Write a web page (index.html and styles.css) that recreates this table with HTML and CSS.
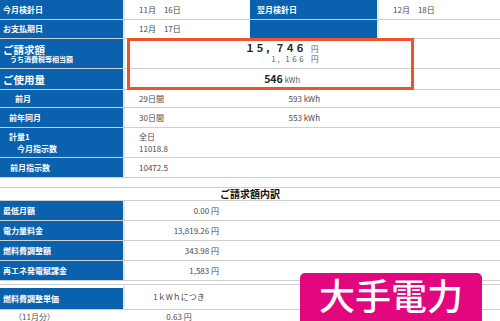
FILE: index.html
```html
<!DOCTYPE html>
<html lang="ja">
<head>
<meta charset="utf-8">
<title>ご請求内容</title>
<link rel="stylesheet" href="styles.css">
</head>
<body>
<div class="page">
  <div class="tbl">
    <div class="row h20">
      <div class="lab">今月検針日</div>
      <div class="val w127">11月　16日</div>
      <div class="lab lab2">翌月検針日</div>
      <div class="val">12月　18日</div>
    </div>
    <div class="row h19">
      <div class="lab">お支払期日</div>
      <div class="val w127">12月　17日</div>
      <div class="lab lab2"></div>
      <div class="val"></div>
    </div>
    <div class="row h30">
      <div class="lab">
        <span class="big">ご請求額</span>
        <span class="tiny">うち消費税等相当額</span>
      </div>
      <div class="val">
        <div class="amt">
          <div class="ln"><span class="num">１５，７４６</span><span class="yen">円</span></div>
          <div class="ln"><span class="num2">１，１６６</span><span class="yen">円</span></div>
        </div>
      </div>
    </div>
    <div class="row h21">
      <div class="lab"><span class="big">ご使用量</span></div>
      <div class="val">
        <div class="amt use"><span class="kw">546</span><span class="unit">kWh</span></div>
      </div>
    </div>
    <div class="row h18">
      <div class="lab in15">前月</div>
      <div class="val split"><span class="c1">29日間</span><span class="c2">593 kWh</span></div>
    </div>
    <div class="row h20">
      <div class="lab in9">前年同月</div>
      <div class="val split"><span class="c1">30日間</span><span class="c2">553 kWh</span></div>
    </div>
    <div class="row h30">
      <div class="lab in9 two">
        <span>計量1</span>
        <span class="in8">今月指示数</span>
      </div>
      <div class="val two">
        <span>全日</span>
        <span>11018.8</span>
      </div>
    </div>
    <div class="row h20">
      <div class="lab in10">前月指示数</div>
      <div class="val">10472.5</div>
    </div>
  </div>

  <div class="title">ご請求額内訳</div>

  <div class="tbl">
    <div class="row h20">
      <div class="lab">最低月額</div>
      <div class="val"><span class="money">0.00 円</span></div>
    </div>
    <div class="row h20">
      <div class="lab">電力量料金</div>
      <div class="val"><span class="money">13,819.26 円</span></div>
    </div>
    <div class="row h20">
      <div class="lab">燃料費調整額</div>
      <div class="val"><span class="money">343.98 円</span></div>
    </div>
    <div class="row h20">
      <div class="lab">再エネ発電賦課金</div>
      <div class="val"><span class="money">1,583 円</span></div>
    </div>
  </div>

  <div class="tbl tbl3">
    <div class="row h25 padtop">
      <div class="lab">燃料費調整単価</div>
      <div class="val"><span class="center">1ｋWｈにつき</span></div>
    </div>
    <div class="row h20 plain">
      <div class="lab white">（11月分）</div>
      <div class="val"><span class="center">0.63 円</span></div>
    </div>
  </div>

  <div class="redbox"></div>
  <div class="badge">大手電力</div>
</div>
</body>
</html>
```

FILE: styles.css
```css
html, body {
  margin: 0;
  padding: 0;
  background: #fff;
}

.page {
  position: relative;
  width: 500px;
  height: 321px;
  overflow: hidden;
  font-family: "Noto Sans CJK JP", "Noto Sans", sans-serif;
  color: #4a4a4a;
}

.tbl {
  display: flex;
  flex-direction: column;
}

.row {
  display: flex;
  box-sizing: border-box;
  border-bottom: 1px solid #cfcfcf;
}

.h18 { height: 18px; }
.h19 { height: 19px; }
.h20 { height: 20px; }
.h21 { height: 21px; }
.h25 { height: 25px; }
.h30 { height: 30px; }

.lab {
  width: 123px;
  flex: none;
  box-sizing: border-box;
  background: #0a61ae;
  color: #fff;
  font-weight: bold;
  font-size: 8px;
  line-height: 12px;
  padding-left: 3px;
  display: flex;
  flex-direction: column;
  justify-content: center;
}

.lab2 {
  width: 127px;
  padding-left: 7px;
}

.in15 { padding-left: 15px; }
.in9 { padding-left: 9px; }
.in10 { padding-left: 10px; }
.in8 { padding-left: 8px; }

.big {
  font-size: 10.5px;
  line-height: 11px;
}

.tiny {
  font-size: 7px;
  line-height: 9px;
  padding-left: 7px;
}

.val {
  flex: 1;
  box-sizing: border-box;
  border-left: 2px solid #e9e9e9;
  font-size: 8px;
  line-height: 12px;
  padding-left: 14px;
  display: flex;
  flex-direction: column;
  justify-content: center;
}

.w127 {
  flex: none;
  width: 127px;
}

.two {
  justify-content: center;
}

.amt {
  width: 180px;
  text-align: right;
}

.ln {
  line-height: 10px;
}

.num {
  font-size: 10px;
  font-weight: bold;
  color: #222;
}

.num2 {
  font-size: 7px;
  color: #555;
}

.yen {
  display: inline-block;
  width: 8px;
  margin-left: 6px;
  font-size: 7.5px;
  text-align: left;
  color: #555;
}

.use {
  width: 161px;
}

.kw {
  font-size: 10.5px;
  font-weight: bold;
  color: #222;
}

.unit {
  font-size: 7.5px;
  margin-left: 2px;
  color: #555;
}

.split {
  flex-direction: row;
  align-items: center;
  justify-content: flex-start;
}

.c1 {
  width: 111px;
}

.c2 {
  width: 70px;
  text-align: right;
}

.title {
  margin-top: 9px;
  height: 14px;
  box-sizing: border-box;
  border-top: 1px solid #cfcfcf;
  border-bottom: 1px solid #cfcfcf;
  text-align: center;
  font-weight: bold;
  font-size: 10px;
  line-height: 12px;
  color: #111;
}

.money {
  display: block;
  width: 80px;
  text-align: right;
}

.tbl3 {
  margin-top: 3px;
  border-top: 1px solid #cfcfcf;
}

.padtop .lab {
  margin-top: 3px;
}

.plain {
  border-bottom: none;
  height: 11px;
}

.plain .lab,
.plain .val {
  justify-content: flex-start;
  padding-top: 2px;
  line-height: 9px;
}

.white {
  background: #fff;
  color: #555;
  font-weight: normal;
  padding-left: 14px;
}

.plain .val {
  border-left: none;
  padding-left: 16px;
}

.center {
  display: block;
  width: 80px;
  text-align: center;
}

.redbox {
  position: absolute;
  left: 127px;
  top: 38px;
  width: 287px;
  height: 52px;
  box-sizing: border-box;
  border: 3px solid #f2522b;
}

.badge {
  position: absolute;
  left: 300px;
  top: 273px;
  width: 182px;
  height: 60px;
  border-radius: 5px;
  background: #e3077f;
  color: #fff;
  font-size: 36px;
  font-weight: 500;
  line-height: 42px;
  text-align: center;
}
```
